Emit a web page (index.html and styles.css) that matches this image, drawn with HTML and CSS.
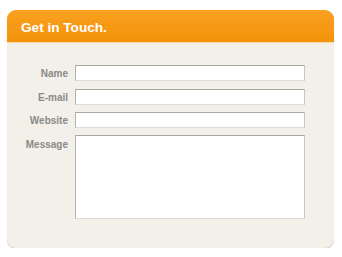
FILE: index.html
```html
<!DOCTYPE html>
<html>
<head>
<meta charset="utf-8">
<link rel="stylesheet" href="styles.css">
</head>
<body>
<div class="card">
  <div class="card-header">Get in Touch.</div>
  <form class="card-body">
    <label class="lbl">Name</label><input class="field" type="text">
    <label class="lbl row-email">E-mail</label><input class="field row-email" type="text">
    <label class="lbl">Website</label><input class="field" type="text">
    <label class="lbl lbl-top row-msg">Message</label><textarea class="field area row-msg"></textarea>
  </form>
</div>
</body>
</html>
```
FILE: styles.css
```css
html, body { margin: 0; padding: 0; background: #ffffff; }
body { padding: 10px 8px 0 7px; font-family: "Liberation Sans", Arial, sans-serif; }
.card {
  width: 327px;
  height: 238px;
  border-radius: 9px;
  background: #f2f0e9;
  box-shadow: 0 1px 1px #c9c8c2;
  overflow: hidden;
  display: flex;
  flex-direction: column;
}
.card-header {
  height: 33px;
  box-sizing: border-box;
  padding: 10px 0 0 14px;
  background: linear-gradient(#f9a11f, #f3930c);
  color: #fff;
  font-weight: bold;
  font-size: 13.6px;
  border-bottom: 1px solid #fbd9a6;
}
.card-body {
  margin: 0;
  padding: 22px 0 0 0;
  display: grid;
  grid-template-columns: 61px 230px;
  column-gap: 7px;
  row-gap: 7px;
  align-items: center;
}
.row-email { margin-top: 1px; }
.row-msg { margin-top: 2px; }
.lbl {
  text-align: right;
  font-size: 10px;
  font-weight: bold;
  color: #8a8a86;
}
.field {
  box-sizing: border-box;
  margin: 0;
  width: 230px;
  height: 16px;
  background: #fff;
  border: 1px solid;
  border-color: #a8a8a0 #c8c8c0 #dddcd4 #b4b4ac;
  padding: 0;
  outline: none;
  font: 11px "Liberation Sans", Arial, sans-serif;
}
.field.row-email { margin-top: 1px; }
.area {
  height: 84px;
  resize: none;
  align-self: start;
}
.lbl-top { align-self: start; padding-top: 2px; }
```
